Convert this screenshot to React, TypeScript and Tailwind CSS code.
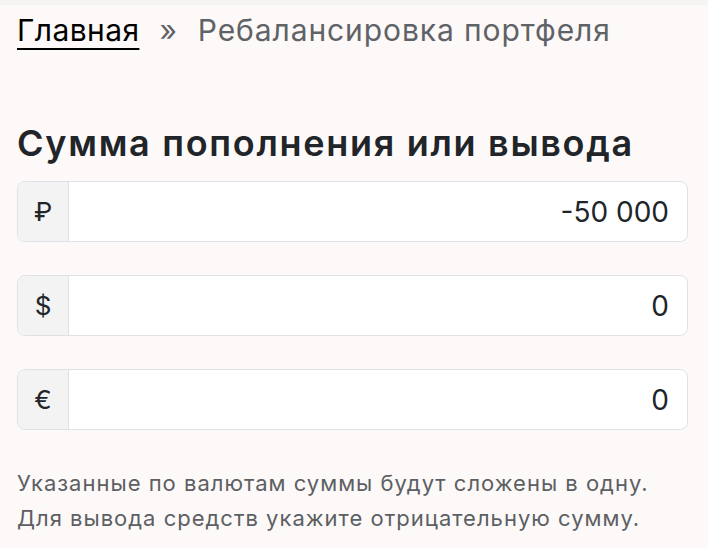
import React from 'react';

const fields = [
  { sign: '₽', value: '-50 000' },
  { sign: '$', value: '0' },
  { sign: '€', value: '0' },
];

export default function App() {
  return (
    <div className="min-h-[548px] w-full bg-[#fdf9f8] text-[#212529]" style={{ fontFamily: 'Inter, "Noto Sans", sans-serif' }}>
      <div className="h-[5px] bg-[#f6f4f3]" />
      {/* Breadcrumbs */}
      <nav className="flex items-center px-[17px] pt-[7px] text-[30px] leading-[36px] tracking-[0.9px]">
        <a href="#" className="text-black underline underline-offset-[7px] decoration-2 tracking-[0.4px]">Главная</a>
        <span className="mx-[20px] text-[#5f6266]">»</span>
        <span className="text-[#5f6266]">Ребалансировка портфеля</span>
      </nav>

      <div className="px-[17px] pt-[73px]">
        <h2 className="mb-[16px] text-[36px] font-semibold leading-[44px] tracking-[1.7px] text-[#212529]">Сумма пополнения или вывода</h2>

        <div className="flex flex-col gap-[33px]">
          {fields.map((f) => (
            <div key={f.sign} className="flex h-[61px] w-[671px] rounded-[8px] border border-[#dee2e6] bg-white">
              <span className="flex w-[51px] items-center justify-center rounded-l-[8px] border-r border-[#dee2e6] bg-[#f3f3f4] text-[26px] text-[#212529]">
                {f.sign}
              </span>
              <input
                readOnly
                value={f.value}
                className="min-w-0 flex-1 rounded-r-[8px] bg-white px-[18px] text-right text-[28px] text-[#212529] outline-none"
              />
            </div>
          ))}
        </div>

        <p className="mt-[36px] text-[22px] leading-[35px] tracking-[1px] text-[#5c5f63]">
          Указанные по валютам суммы будут сложены в одну.
          <br />
          Для вывода средств укажите отрицательную сумму.
        </p>
      </div>
    </div>
  );
}
